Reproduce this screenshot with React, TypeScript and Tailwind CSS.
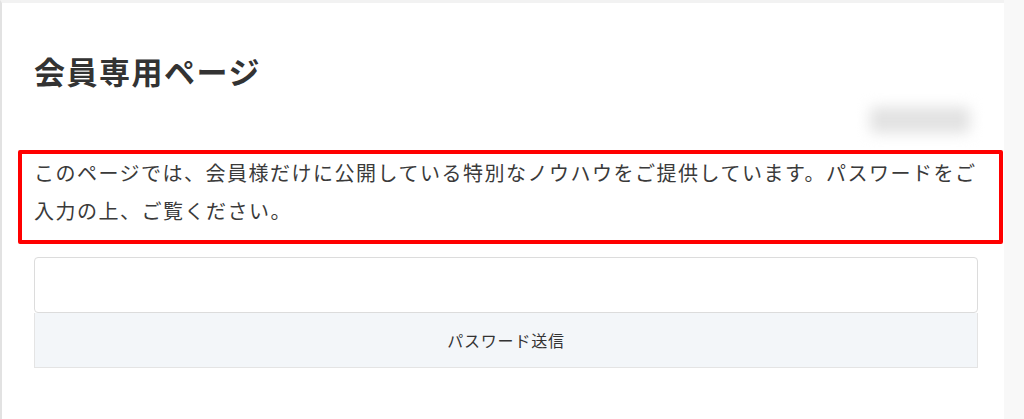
import React from "react";

export default function App() {
  return (
    <div
      className="flex h-[419px] w-[1024px] overflow-hidden bg-[#f8f8f8]"
      style={{ fontFamily: '"Noto Sans CJK JP", "Noto Sans", sans-serif' }}
    >
      <div className="flex h-full w-[1004px] flex-col border-l-2 border-t-[3px] border-l-[#e2e2e2] border-t-[#f2f2f2] bg-white pl-[32px] pr-[26px] text-[#333]">
        <h1 className="mt-[48px] text-[31px] font-bold leading-[40px] tracking-[1.5px] text-[#333]">
          会員専用ページ
        </h1>
        <div className="mt-[16px] flex justify-end pr-[8px]">
          <div className="h-[26px] w-[100px] rounded bg-[#e2e2e2] blur-[7px]" />
        </div>
        <div className="-ml-[16px] -mr-[25px] mt-[17px] rounded-[2px] border-4 border-[#ff0000] pl-[12px] pr-[14px] pb-[10px] pt-0">
          <p className="text-[20px] leading-[38px] tracking-[1.5px] text-[#3a3a3a]">
            このページでは、会員様だけに公開している特別なノウハウをご提供しています。パスワードをご入力の上、ご覧ください。
          </p>
        </div>
        <div className="mt-[13px] h-[56px] w-full rounded-[4px] border border-[#dcdcdc] bg-white" />
        <div className="flex h-[55px] w-full items-center justify-center border border-t-0 border-[#e4e4e4] bg-[#f3f6f9] text-[16px] tracking-[0.8px] text-[#333]">
          パスワード送信
        </div>
      </div>
    </div>
  );
}
